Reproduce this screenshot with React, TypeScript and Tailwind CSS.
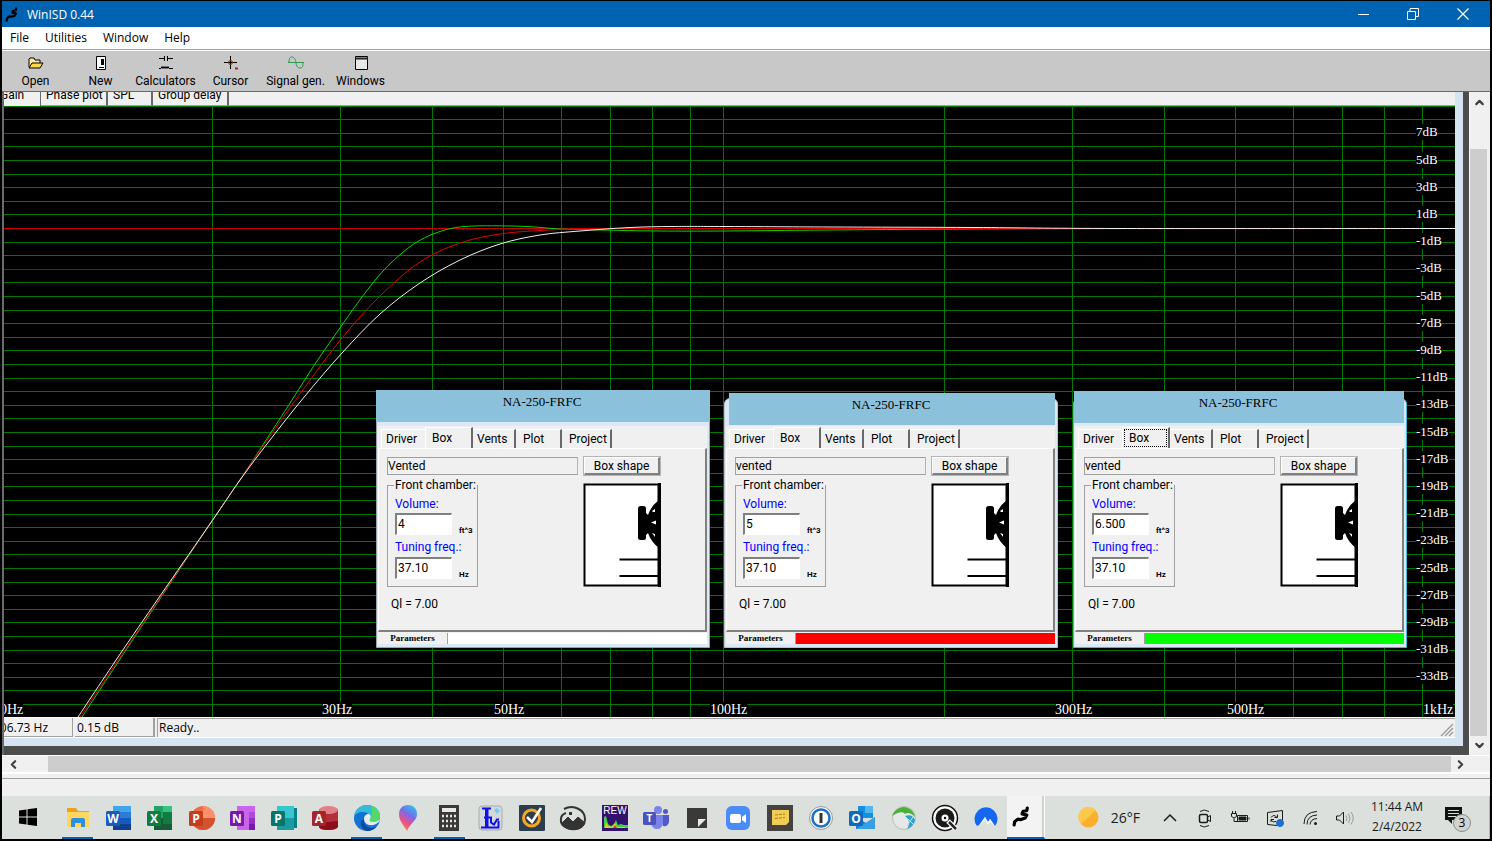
import type { ReactNode } from "react"
import clsx from "clsx"
import { ChevronDown, ChevronLeft, ChevronRight, ChevronUp } from "lucide-react"

type Point = [number, number]

// the plot is drawn in one space: x is log frequency, y is gain
const PLOT = { left: 4, top: 106, width: 1451, height: 611 }

const freqX = (hz: number) => 212 + 732 * Math.log10(hz / 20)
const gainY = (db: number) => 228.5 - 13.6 * db

const freqLines = [20, 30, 40, 50, 60, 70, 80, 90, 100, 200, 300, 400, 500, 600, 700, 800, 900]
const gainLines = Array.from({ length: 45 }, (_, i) => 9 - i)
const gainLabels = Array.from({ length: 21 }, (_, i) => 7 - i * 2)

const freqLabels = [
  { text: "10Hz", x: -7 },
  { text: "30Hz", x: 322 },
  { text: "50Hz", x: 494 },
  { text: "100Hz", x: 710 },
  { text: "300Hz", x: 1055 },
  { text: "500Hz", x: 1227 },
  { text: "1kHz", x: 1423 },
]

const curves: { color: string; points: Point[] }[] = [
  {
    color: "#00d800",
    points: [[82, 717], [132, 641], [212, 521], [240, 480], [270, 434], [292, 400], [315, 364], [342, 325], [362, 297], [383, 271], [402, 253], [417, 242], [433, 234], [453, 228], [475, 226], [510, 226], [535, 227], [560, 229], [600, 230], [660, 231], [724, 231], [830, 230], [975, 229], [1200, 228.5], [1455, 228.5]],
  },
  {
    color: "#e00000",
    points: [[80, 717], [131, 641], [212, 521], [240, 480], [270, 436], [305, 387], [342, 338], [380, 296], [420, 262], [460, 243], [500, 234], [540, 230.5], [580, 229], [640, 228.5], [830, 228.5], [1455, 228.5]],
  },
  {
    color: "#f0f0f0",
    points: [[78, 717], [129, 641], [212, 521], [240, 480], [270, 440], [305, 396], [342, 353], [380, 314], [420, 283], [460, 260], [500, 244], [540, 235], [580, 231], [630, 227.5], [673, 226.5], [724, 226.5], [830, 227], [975, 227.5], [1120, 228.5], [1455, 228.5]],
  },
]

const smoothPath = (p: Point[]) =>
  p.slice(1).reduce((d, cur, i) => {
    const prev = p[i]
    const before = p[i - 1] ?? prev
    const after = p[i + 2] ?? cur
    const c1 = [prev[0] + (cur[0] - before[0]) / 6, prev[1] + (cur[1] - before[1]) / 6]
    const c2 = [cur[0] - (after[0] - prev[0]) / 6, cur[1] - (after[1] - prev[1]) / 6]
    return `${d}C${c1.join(" ")} ${c2.join(" ")} ${cur.join(" ")}`
  }, `M${p[0].join(" ")}`)

const left = (x: number) => `${((x - PLOT.left) / PLOT.width) * 100}%`
const top = (y: number) => `${((y - PLOT.top) / PLOT.height) * 100}%`

const ui = "font-['Roboto','Liberation_Sans',sans-serif]"
const serif = "font-['Liberation_Serif',serif]"

const Squiggle = ({ className }: { className?: string }) => (
  <svg viewBox="0 0 18 20" className={className} aria-hidden>
    <path d="M2 18 L2.500 15 L5.500 12.500 L8 13 L12.500 11.500 L14 8.500 L9.500 7.500 L10.500 5 L14 4.500 L14.500 2" fill="none" stroke="#000" strokeWidth="3" strokeLinecap="round" strokeLinejoin="round" />
  </svg>
)

const TitleBar = () => (
  <header className="flex h-[26px] shrink-0 items-center bg-[#0063b1] text-white">
    <Squiggle className="ml-[3px] h-[15px] w-[14px]" />
    <h1 className="ml-2 pt-px text-xs">WinISD 0.44</h1>
    <div className="ml-auto flex h-full">
      <button aria-label="Minimize" className="flex w-[49px] items-center justify-center">
        <svg width="12" height="12"><path d="M0 6.500H11" stroke="#fff" /></svg>
      </button>
      <button aria-label="Restore" className="flex w-[49px] items-center justify-center">
        <svg width="12" height="12" fill="none" stroke="#fff"><path d="M.5 3.500h8v8h-8zM3 3.500V.5h8.500v8H9" /></svg>
      </button>
      <button aria-label="Close" className="flex w-[53px] items-center justify-center pr-px pb-px">
        <svg width="12" height="12"><path d="M.5 .5l11 11M11.500 .5l-11 11" stroke="#fff" strokeWidth="1.200" /></svg>
      </button>
    </div>
  </header>
)

const MenuBar = () => (
  <nav className="flex h-[22px] shrink-0 items-center gap-4 bg-white pl-2 text-xs text-black">
    {["File", "Utilities", "Window", "Help"].map((item) => (
      <button key={item}>{item}</button>
    ))}
  </nav>
)

const tools: { name: string; icon: ReactNode }[] = [
  {
    name: "Open",
    icon: (
      <svg width="18" height="16" stroke="#000" strokeLinejoin="round">
        <path d="M2 12V4l1-1h4l1 2h5v3" fill="#fbe9a0" />
        <path d="M2 13l3-5h11l-3 5z" fill="#ffd84a" />
      </svg>
    ),
  },
  {
    name: "New",
    icon: (
      <svg width="18" height="16">
        <path d="M4.500 1.500h9v13h-9z" fill="#fff" stroke="#000" />
        <path d="M9 4h3v6H9zM7 12h5v1H7z" fill="#000" />
      </svg>
    ),
  },
  {
    name: "Calculators",
    icon: (
      <svg width="18" height="16" fill="none" stroke="#000">
        <path d="M2 3.500h5M7.500 1v5M10.500 1v5M11 3.500h5M2 13.500h2l1-2 1 2 1-2 1 2 1-2 1 2 1-2 1 2h4" />
      </svg>
    ),
  },
  {
    name: "Cursor",
    icon: (
      <svg width="18" height="16" fill="none" stroke="#000">
        <path d="M8.500 1v13M2 7.500h13" />
        <circle cx="8.500" cy="7.500" r="2" stroke="#7a4a00" />
        <path d="M13 13.500h3" stroke="#b02020" strokeWidth="2" />
      </svg>
    ),
  },
  {
    name: "Signal gen.",
    icon: (
      <svg width="20" height="16" fill="none" stroke="#2e9a4e">
        <path d="M2 7.500h16M3 7.500C3 3 4 2 6 2s3.500 2 4 6 2 5 4 5 3-1 3-5" />
      </svg>
    ),
  },
  {
    name: "Windows",
    icon: (
      <svg width="18" height="16">
        <path d="M3.500 1.500h12v13h-12z" fill="#e8e8e8" stroke="#000" />
        <path d="M3 3.500h13" stroke="#222" strokeWidth="2" />
      </svg>
    ),
  },
]

const Toolbar = () => (
  <div className="h-[43px] shrink-0 border-t border-b border-t-[#a0a0a0] border-b-[#696969]">
    <div className={clsx("flex h-full border-t border-white bg-[#c8c8c8] pl-px text-xs text-black", ui)}>
      {tools.map(({ name, icon }) => (
        <button key={name} className="flex w-[65px] flex-col items-center pt-1 whitespace-nowrap">
          {icon}
          <span className="leading-5">{name}</span>
        </button>
      ))}
    </div>
  </div>
)

const plotTabs = [
  { name: "Phase plot", width: "w-[67px]" },
  { name: "SPL", width: "w-[45px]" },
  { name: "Group delay", width: "w-[76px]" },
]

const PlotTabs = () => (
  <div className={clsx("flex h-[14px] shrink-0 items-end overflow-hidden bg-[#f0f0f0] text-xs text-black", ui)}>
    <button className="-ml-1 h-5 w-[41px] border-r border-[#696969] pb-[3px] text-left leading-4">Gain</button>
    {plotTabs.map((tab) => (
      <button
        key={tab.name}
        className={clsx("h-5 border-r-2 border-b border-r-[#696969] border-b-[#a0a0a0] pb-px pl-[5px] text-left leading-4", tab.width)}
      >
        {tab.name}
      </button>
    ))}
    <div className="h-5 flex-1 border-b border-[#a0a0a0]" />
  </div>
)

const Plot = () => (
  <div className={clsx("absolute inset-0 bg-black text-sm leading-4 text-white", serif)}>
    <svg
      viewBox={`${PLOT.left} ${PLOT.top} ${PLOT.width} ${PLOT.height}`}
      preserveAspectRatio="none"
      className="absolute inset-0 h-full w-full"
      fill="none"
      role="img"
      aria-label="Gain plot"
    >
      <g stroke="#007800" shapeRendering="crispEdges">
        {gainLines.filter((db) => db !== -3 && db !== 0).map((db) => (
          <path key={db} d={`M4 ${gainY(db)}H1455`} />
        ))}
        {freqLines.map((hz) => (
          <path key={hz} d={`M${freqX(hz)} 106V717`} />
        ))}
      </g>
      <path d={`M4 ${gainY(-3)}H1455`} stroke="#7c007c" shapeRendering="crispEdges" />
      <path d={`M4 ${gainY(0)}H1455`} stroke="#c80000" shapeRendering="crispEdges" />
      {curves.map(({ color, points }) => (
        <path key={color} d={smoothPath(points)} stroke={color} />
      ))}
    </svg>
    {gainLabels.map((db) => (
      <span key={db} className="absolute -translate-y-1/2 bg-black text-[13px]" style={{ left: left(1416), top: top(gainY(db) - 1) }}>
        {db}dB
      </span>
    ))}
    {freqLabels.map(({ text, x }) => (
      <span key={text} className="absolute bottom-0 bg-black leading-[15px]" style={{ left: left(x) }}>
        {text}
      </span>
    ))}
  </div>
)

const BoxDrawing = () => (
  <svg width="78" height="104" aria-hidden>
    <path d="M1.500 1.500h74v101h-74z" fill="#fff" stroke="#000" strokeWidth="2" />
    <path d="M76.500 0v104" stroke="#000" strokeWidth="3" />
    <path d="M36.500 76.500H75M36.500 93H75" stroke="#000" strokeWidth="2" />
    <rect x="55" y="23" width="8" height="34" rx="2.500" />
    <path d="M62 29l3 3q3-9 11-15v48q-8-6-11-15l-3 3z" />
    <path d="M69 28l3-2v3h-2zM68 39.500l5-2v4zM69 50l3 1v3z" fill="#fff" />
  </svg>
)

const boxTabs = [
  { name: "Vents", className: "w-[43px] pl-1" },
  { name: "Plot", className: "w-[46px] pl-[7px]" },
  { name: "Project", className: "w-[50px] pl-[7px]" },
]

interface IBoxWindow {
  id: string
  type: string
  volume: string
  color: string
  position: string
  frame: string
  title: string
  focused?: boolean
}

const inputStyle = "h-[22px] w-[57px] border border-t-2 border-l-2 border-t-[#808080] border-l-[#808080] border-r-white border-b-white bg-white pl-px pb-px"

const BoxWindow = ({ id, type, volume, color, position, frame, title, focused }: IBoxWindow) => (
  <section className={clsx("absolute flex h-[258px] w-[334px] flex-col text-xs text-black", ui, position)}>
    <div className={clsx("absolute inset-x-0 top-2 bottom-0 rounded-t-md border bg-[#dbe9f6]", frame)} />
    <div className="relative h-9">
      <h2 className={clsx("h-8 bg-[#8cc1dc] pt-1 pr-[2px] text-center text-[13px] leading-4", serif, title)}>NA-250-FRFC</h2>
    </div>
    <div className="relative mr-[3px] mb-[3px] ml-[2px] flex flex-1 flex-col bg-[#f0f0f0]">
      <div className="flex h-[22px] items-end pl-[3px]">
        <button className="h-[19px] w-[44px] border-t border-l border-white pl-1 text-left">Driver</button>
        <button className="h-[21px] w-[48px] border-t border-l border-r-2 border-white border-r-[#696969] p-px">
          <span className={clsx("block h-full border border-dotted pl-1 text-left leading-4", focused ? "border-black" : "border-transparent")}>
            Box
          </span>
        </button>
        {boxTabs.map((tab) => (
          <button key={tab.name} className={clsx("h-[19px] border-t border-r-2 border-t-white border-r-[#696969] text-left", tab.className)}>
            {tab.name}
          </button>
        ))}
      </div>
      <div className="flex-1 border-t border-r-2 border-b-2 border-l border-t-white border-r-[#808080] border-b-[#808080] border-l-white pt-2 pl-2">
        <div className="flex gap-[6px]">
          <input
            readOnly
            aria-label="Box type"
            value={type}
            className="h-[18px] w-[191px] border border-[#a0a0a0] border-r-[#b4b4b4] bg-[#f0f0f0]"
          />
          <button className="h-[18px] w-[76px] border border-t-white border-r-2 border-b-2 border-l-white border-r-[#808080] border-b-[#808080] leading-[14px] outline outline-[#b4b4b4]">
            Box shape
          </button>
        </div>
        <div className="mt-1 flex w-[274px] items-end justify-between">
          <fieldset className="h-[108px] w-[91px] border border-[#a0a0a0] pt-1 pl-[7px]">
            <legend className="-ml-px px-px leading-[13px] whitespace-nowrap">Front chamber:</legend>
            <label htmlFor={`${id}-volume`} className="block leading-4 text-[#0000ff]">Volume:</label>
            <div className="mt-px flex items-end gap-[7px]">
              <input id={`${id}-volume`} defaultValue={volume} className={inputStyle} />
              <span className="text-[8px] leading-[9px] font-bold">ft^3</span>
            </div>
            <label htmlFor={`${id}-tuning`} className="mt-1 block leading-4 text-[#0000ff]">Tuning freq.:</label>
            <div className="mt-[2px] flex items-end gap-[7px]">
              <input id={`${id}-tuning`} defaultValue="37.10" className={inputStyle} />
              <span className="text-[8px] leading-[9px] font-bold">Hz</span>
            </div>
          </fieldset>
          <BoxDrawing />
        </div>
        <p className="mt-[9px] ml-1 leading-4">Ql = 7.00</p>
      </div>
      <div className="flex h-[13px] border-b border-[#dbe9f6] pt-px">
        <div className={clsx("w-[70px] border-r border-[#a0a0a0] text-center text-[9px] leading-[11px] font-bold", serif)}>Parameters</div>
        <div className={clsx("flex-1", color)} />
      </div>
    </div>
  </section>
)

const StatusBar = () => (
  <footer className="flex h-[21px] shrink-0 items-center gap-[2px] border-y border-white bg-[#f0f0f0] text-xs text-black">
    <div className="flex h-full w-[69px] items-center overflow-hidden border-r border-b border-[#a0a0a0] pt-[2px] whitespace-nowrap">
      <span className="-ml-[11px]">106.73 Hz</span>
    </div>
    <div className="flex h-full w-[80px] items-center border-r-2 border-b border-[#a0a0a0] pt-[2px] pl-[2px]">0.15 dB</div>
    <div className="flex h-full flex-1 items-center justify-between border-t border-l border-[#a0a0a0] pl-px">
      Ready..
      <svg width="14" height="14" stroke="#a0a0a0" strokeWidth="1.500" className="mr-px self-end" aria-hidden>
        <path d="M1 13L13 1M5 13l8-8M9 13l4-4" />
      </svg>
    </div>
  </footer>
)

const ProjectWindow = () => (
  <main className="flex min-w-0 flex-1 flex-col border-r-[6px] border-b-[9px] border-[#4d4d4d]">
    <div className="flex flex-1 flex-col border-r-8 border-b-8 border-[#d6e4f1]">
      <PlotTabs />
      <div className="relative flex-1 overflow-hidden">
        <Plot />
        <BoxWindow id="box1" type="Vented" volume="4" color="bg-white" position="left-[372px] top-[284px]" frame="border-[#9aa4ac]" title="" />
        <BoxWindow id="box2" type="vented" volume="5" color="bg-[#ff0000]" position="left-[720px] top-[284px]" frame="border-[#b8c4cc]" title="mt-[3px] ml-[5px] mr-[3px]" />
        <BoxWindow id="box3" type="vented" volume="6.500" color="bg-[#00ff00]" position="left-[1069px] top-[284px]" frame="border-[#45b8d8]" title="mt-px ml-px mr-[3px]" focused />
      </div>
      <StatusBar />
    </div>
  </main>
)

const scrollArrow = "flex items-center justify-center text-[#404040]"

const VerticalScroll = () => (
  <div className="mr-[2px] flex w-[19px] shrink-0 flex-col border-l border-white bg-[#f0f0f0]">
    <button aria-label="Scroll up" className={clsx(scrollArrow, "h-5")}>
      <ChevronUp size={13} strokeWidth={4} />
    </button>
    <div className="mt-[37px] mr-px flex-1 bg-[#cdcdcd]" />
    <button aria-label="Scroll down" className={clsx(scrollArrow, "h-[19px]")}>
      <ChevronDown size={13} strokeWidth={4} />
    </button>
  </div>
)

const HorizontalScroll = () => (
  <div className="flex h-[19px] shrink-0 border-t border-b-2 border-white bg-[#f0f0f0] pr-5">
    <button aria-label="Scroll left" className={clsx(scrollArrow, "w-[22px]")}>
      <ChevronLeft size={13} strokeWidth={4} />
    </button>
    <div className="ml-6 flex-1 bg-[#cdcdcd]" />
    <button aria-label="Scroll right" className={clsx(scrollArrow, "w-[19px]")}>
      <ChevronRight size={13} strokeWidth={4} />
    </button>
  </div>
)

// letter tile over an application shape, as in the Office icon set
const Office = ({ letter, tile, children }: { letter: string; tile: string; children: ReactNode }) => (
  <svg width="28" height="26" viewBox="0 0 28 26">
    {children}
    <rect x="1" y="6" width="14" height="15" rx="1.500" fill={tile} />
    <text x="8" y="18" textAnchor="middle" fontSize="12" fontWeight="700" fill="#fff" fontFamily="Open Sans, sans-serif">
      {letter}
    </text>
  </svg>
)

const apps: { name: string; icon: ReactNode; running?: boolean }[] = [
  {
    name: "File Explorer",
    running: true,
    icon: (
      <svg width="26" height="24">
        <path d="M2 2h9l2 3h11v16H2z" fill="#e8a317" />
        <path d="M2 6h22v15H2z" fill="#ffd75e" />
        <path d="M6 21v-7q0-2 2-2h10q2 0 2 2v7h-4v-4h-6v4z" fill="#2e8fe0" />
      </svg>
    ),
  },
  {
    name: "Word",
    icon: (
      <Office letter="W" tile="#185abd">
        <path d="M8 1h18v6H8z" fill="#41a5ee" />
        <path d="M8 7h18v6H8z" fill="#2b7cd3" />
        <path d="M8 13h18v6H8z" fill="#185abd" />
        <path d="M8 19h18v6H8z" fill="#103f91" />
      </Office>
    ),
  },
  {
    name: "Excel",
    icon: (
      <Office letter="X" tile="#107c41">
        <path d="M8 1h18v24H8z" fill="#185c37" />
        <path d="M8 1h9v12H8z" fill="#21a366" />
        <path d="M17 1h9v6h-9z" fill="#33c481" />
        <path d="M17 7h9v12h-9z" fill="#107c41" />
      </Office>
    ),
  },
  {
    name: "PowerPoint",
    icon: (
      <Office letter="P" tile="#c43e1c">
        <circle cx="15" cy="13" r="12" fill="#ed6c47" />
        <path d="M15 1a12 12 0 0 1 12 12H15z" fill="#ff8f6b" />
        <path d="M3 13h24a12 12 0 0 1-24 0z" fill="#d35230" />
      </Office>
    ),
  },
  {
    name: "OneNote",
    icon: (
      <Office letter="N" tile="#7719aa">
        <path d="M8 1h18v24H8z" fill="#ca64ea" />
        <path d="M20 7h6v6h-6z" fill="#ae4bd5" />
        <path d="M20 13h6v6h-6z" fill="#9332bf" />
        <path d="M20 19h6v6h-6z" fill="#7719aa" />
      </Office>
    ),
  },
  {
    name: "Publisher",
    icon: (
      <Office letter="P" tile="#077568">
        <path d="M12 3h15v20H12z" fill="#038387" />
        <path d="M7 1h17v12H7z" fill="#37c6d0" />
        <path d="M7 13h17v12H7z" fill="#1a9ba1" />
      </Office>
    ),
  },
  {
    name: "Access",
    icon: (
      <Office letter="A" tile="#a4262c">
        <path d="M8 4v18q1 3 9 3t10-3V4z" fill="#b5303a" />
        <path d="M8 18v4q1 3 9 3t10-3v-6z" fill="#8c0e18" />
        <ellipse cx="17.500" cy="5" rx="9.500" ry="4" fill="#e08088" />
      </Office>
    ),
  },
  {
    name: "Edge",
    running: true,
    icon: (
      <svg width="28" height="28" viewBox="0 0 28 28">
        <circle cx="14" cy="14" r="13" fill="#1173d4" />
        <path d="M1 13C2 5 8 1 14 1c8 0 13 5 13 11 0 4-3 6-7 6-3 0-4-1-3-3 1-4-2-7-7-7-5 0-8 2-9 5z" fill="#33bcd8" />
        <path d="M19 2c5 2 8 6 8 10 0 4-3 6-7 6-3 0-4-1-3-3 2-4 2-8 2-13z" fill="#54d86a" />
        <path d="M11 15c-1 7 6 12 13 7-3 4-7 5-10 5-6-2-9-10-3-12z" fill="#0c4a9c" />
        <path d="M16 10c-3 0-5 2-5 5 0 5 6 8 12 5 2-1 4-3 4-5-2 2-4 3-7 3s-4-1-3-3c1-2 1-4-1-5z" fill="#e6ece8" />
      </svg>
    ),
  },
  {
    name: "Paint 3D",
    icon: (
      <svg width="22" height="28" viewBox="0 0 22 28">
        <defs>
          <linearGradient id="paint" x1="0.800" y1="0" x2="0.300" y2="1">
            <stop offset="0" stopColor="#2cc4ee" />
            <stop offset="0.400" stopColor="#7a6be8" />
            <stop offset="0.700" stopColor="#e8508c" />
            <stop offset="1" stopColor="#f58a3c" />
          </linearGradient>
        </defs>
        <path d="M11 1c6 0 9 4 9 9 0 7-7 9-10 17-3-5-8-10-8-17 0-5 3-9 9-9z" fill="url(#paint)" />
      </svg>
    ),
  },
  {
    name: "Calculator",
    running: true,
    icon: (
      <svg width="22" height="28">
        <path d="M1 1h20v26H1z" fill="#3b3a39" />
        <path d="M4 4h14v4H4z" fill="#e8e8e8" />
        <path d="M4 12h14M4 17h14M4 22h14" stroke="#e8e8e8" strokeWidth="2.500" strokeDasharray="2 2" />
      </svg>
    ),
  },
  {
    name: "LspCAD",
    icon: (
      <svg width="26" height="26">
        <rect x="1" y="1" width="23" height="24" rx="3" fill="#d4d8dc" stroke="#a8acb0" />
        <path d="M4 3.500h9M8.500 3v19M3 22.500h18M20.500 16v7M6 12.500h7v5l3 2 3-5h2" fill="none" stroke="#1010e8" strokeWidth="2" />
        <path d="M7 3h3.500v19H7z" fill="#1010e8" />
        <path d="M16 5l3-2 3 3-3 3z" fill="#6fd0f0" />
      </svg>
    ),
  },
  {
    name: "Norton",
    icon: (
      <svg width="28" height="28">
        <rect x="1" y="1" width="26" height="26" rx="1" fill="#2c3e4c" />
        <circle cx="13.500" cy="14" r="8" fill="none" stroke="#f5a623" strokeWidth="3" />
        <path d="M9 13l5 5L23 4" fill="none" stroke="#fff" strokeWidth="2.500" />
      </svg>
    ),
  },
  {
    name: "Photos",
    icon: (
      <svg width="28" height="26" fill="none" stroke="#333">
        <path d="M5 4c10-5 21 1 21 10 0 6-5 10-12 10S1 20 2 14c0-3 2-5 5-6" strokeWidth="2" />
        <path d="M3 18l6-6 5 5 5-5 7 6c-3 9-20 9-23 0z" fill="#333" />
        <path d="M10 8.500h3" strokeWidth="3" />
      </svg>
    ),
  },
  {
    name: "REW",
    icon: (
      <svg width="28" height="28">
        <path d="M1 1h26v26H1z" fill="#32106e" />
        <path d="M3 24V13l2-1 2 8 3 2 3-2 2-4 2 5 3-1 3 1 4 0v3z" fill="#3fd04a" />
        <path d="M4 24l1-6 2 4 4 1 3-4 2 4 8 0v1z" fill="#e8d020" />
        <path d="M12 24l2-3 2 3z" fill="#e03a20" />
        <text x="14" y="10" textAnchor="middle" fontSize="10" fill="#fff" fontFamily="Liberation Sans, sans-serif">REW</text>
      </svg>
    ),
  },
  {
    name: "Teams",
    icon: (
      <svg width="28" height="26">
        <circle cx="16" cy="5" r="4" fill="#7b83eb" />
        <circle cx="23.500" cy="6.500" r="2.500" fill="#5059c9" />
        <path d="M19 10h8v7q-1 5-6 4z" fill="#5059c9" />
        <path d="M9 10h12v8q-1 6-6 6t-6-6z" fill="#7b83eb" />
        <rect x="1" y="7" width="13" height="13" rx="1.500" fill="#4b53bc" />
        <text x="7.500" y="17" textAnchor="middle" fontSize="10" fontWeight="700" fill="#fff" fontFamily="Open Sans, sans-serif">T</text>
      </svg>
    ),
  },
  {
    name: "Sticky Notes",
    icon: (
      <svg width="22" height="22">
        <path d="M1 1h20v20H1z" fill="#3b3a39" />
        <path d="M12 20v-8h8z" fill="#e8ece8" />
      </svg>
    ),
  },
  {
    name: "Zoom",
    icon: (
      <svg width="26" height="26">
        <rect x="1" y="1" width="24" height="24" rx="6" fill="#4a8cf7" />
        <rect x="5" y="9" width="11" height="9" rx="2" fill="#fff" />
        <path d="M17 12l4-3v9l-4-3z" fill="#fff" />
      </svg>
    ),
  },
  {
    name: "Notes",
    icon: (
      <svg width="28" height="28">
        <path d="M1 1h26v26H1z" fill="#444340" />
        <path d="M6 6h17v12l-3 3H6z" fill="#f2cd55" />
        <path d="M9 11l10-1M9 14.500l10-1" stroke="#a8841c" strokeDasharray="3 1" />
      </svg>
    ),
  },
  {
    name: "1Password",
    icon: (
      <svg width="26" height="26">
        <circle cx="13" cy="13" r="11.500" fill="#f4f4f4" stroke="#9a9a9a" />
        <circle cx="13" cy="13" r="8.500" fill="#fff" stroke="#1a72c4" strokeWidth="2.500" />
        <path d="M13 8v10" stroke="#333" strokeWidth="3" />
      </svg>
    ),
  },
  {
    name: "Outlook",
    icon: (
      <Office letter="O" tile="#0f6cbd">
        <path d="M10 1h15v12H10z" fill="#1490df" />
        <path d="M17 1h8v7h-8z" fill="#50b5f2" />
        <path d="M8 12l10 6 9-6v12H8z" fill="#1f7fd0" />
        <path d="M8 24l19-12v12z" fill="#35a0e8" />
      </Office>
    ),
  },
  {
    name: "Webex",
    icon: (
      <svg width="26" height="26">
        <circle cx="13" cy="13" r="11.500" fill="#e4e8e6" stroke="#b8bcba" />
        <path d="M1 11C4 4 11 0 17 3c4 2 6 4 7 9-4-4-7-5-10-3-2-3-7-2-13 2z" fill="#4caf3a" />
        <path d="M14 11c6-2 9 1 10 4-1 4-3 7-8 9 3-5 3-9-2-13z" fill="#2fa0cc" />
        <path d="M17 14l6 6M22 12l-6 9" stroke="#bfe0ec" />
      </svg>
    ),
  },
  {
    name: "Groove",
    icon: (
      <svg width="28" height="28">
        <circle cx="14" cy="14" r="12.500" fill="#fff" stroke="#111" strokeWidth="1.500" />
        <circle cx="14" cy="14" r="9.500" fill="#1a1a1a" />
        <circle cx="14" cy="14" r="3.500" fill="#fff" />
        <circle cx="14" cy="14" r="1.200" />
        <path d="M17 17l8 8" stroke="#fff" strokeWidth="5" />
        <path d="M18 18l7 7" stroke="#222" strokeWidth="2.500" />
      </svg>
    ),
  },
  {
    name: "NordVPN",
    icon: (
      <svg width="26" height="24">
        <path d="M4 20A11.500 11.500 0 1 1 22 20l-5-7-2 3-3-5-6 8z" fill="#1566f0" />
        <path d="M6 20l6-9 3 5 2-3 5 7-5-4-2 3-3-5z" fill="#f4f8fc" />
      </svg>
    ),
  },
]

const tray: { name: string; icon: ReactNode }[] = [
  { name: "Show hidden icons", icon: <path d="M4 13l6-6 6 6" strokeWidth="1.500" /> },
  {
    name: "Meet now",
    icon: (
      <>
        <rect x="4.500" y="6.500" width="8" height="8" rx="1.500" strokeWidth="1.500" />
        <path d="M12.500 9l3-1.500v6l-3-1.500M5 3.500q4-3 9 0M5 17.500q4 3 9 0" />
      </>
    ),
  },
  {
    name: "Battery",
    icon: (
      <>
        <path d="M7.500 7.500h10v6h-10zM19 9.500v2M1.500 5.500h5v3q-2.500 3-5 0zM2.500 3v2.500M5.500 3v2.500M4 10.500v3h4" />
        <path d="M9 9h7v3H9z" fill="currentColor" />
      </>
    ),
  },
  {
    name: "Sync",
    icon: (
      <>
        <path d="M2.500 4.500l15-2v10M12 17.500l-9.500-1v-12M6 9.500q3-4 6 0M12.500 6.500v3h-3M6 14v-2.500h3M6 12q2 3 5 1.500" />
        <circle cx="15" cy="15" r="3.500" fill="#1a6fd0" stroke="#1a6fd0" />
      </>
    ),
  },
  {
    name: "Wi-Fi",
    icon: (
      <>
        <path d="M4 16Q4 4 17 3.500M7 16.500Q7 7.500 17 7M10 16.500Q10.500 11 17 10.500" />
        <circle cx="15.500" cy="15.500" r="1.500" fill="currentColor" stroke="none" />
      </>
    ),
  },
  {
    name: "Volume",
    icon: (
      <>
        <path d="M1.500 8h3l4-4v12l-4-4h-3z" />
        <path d="M11 7.500q2 3 0 5.500M13.500 5.500q3 5 0 9.500M16 4q4.500 6 0 12.500" stroke="#999" />
      </>
    ),
  },
]

const Taskbar = () => (
  <div className="flex h-[43px] shrink-0 items-stretch bg-[#dce0dc] text-xs text-[#1a1a1a]">
    <button aria-label="Start" className="flex w-[55px] shrink-0 items-center justify-center pr-[3px] pb-[2px]">
      <svg width="18" height="18" aria-hidden>
        <path d="M0 2.500l7.500-1V8.500H0zM8.500 1.300L18 0v8.500H8.500zM0 9.500h7.500v7l-7.500-1zM8.500 9.500H18V18l-9.500-1.300z" />
      </svg>
    </button>
    <div className="flex w-[950px]">
      {apps.map(({ name, icon, running }) => (
        <button key={name} aria-label={name} className="flex min-w-0 flex-1 flex-col items-center">
          <span className="flex flex-1 items-center">{icon}</span>
          <span className={clsx("-mt-[2px] h-[2px] w-[31px]", running && "bg-[#0063b1]")} />
        </button>
      ))}
    </div>
    <button aria-label="WinISD" className="flex w-[35px] shrink-0 items-center justify-center border-b-2 border-[#0063b1] bg-[#f2f3f2] pr-[6px]">
      <Squiggle className="h-[21px] w-[19px]" />
    </button>
    <div className="w-[3px] border-r border-b-2 border-r-white border-b-[#0063b1] bg-[#cfd3cf]" />
    <button className="ml-auto flex items-center gap-3">
      <svg width="21" height="21" aria-hidden>
        <circle cx="10.500" cy="10.500" r="10" fill="#fbb02d" />
        <path d="M3 17A10 10 0 0 1 18 3z" fill="#fcc94a" />
      </svg>
      <span className="text-sm">26°F</span>
    </button>
    <div className="ml-3 flex">
      {tray.map(({ name, icon }) => (
        <button key={name} aria-label={name} className="flex w-[35px] items-center justify-center">
          <svg width="20" height="20" fill="none" stroke="currentColor" aria-hidden>
            {icon}
          </svg>
        </button>
      ))}
    </div>
    <div className="ml-[7px] flex w-[56px] flex-col justify-center pb-px text-center leading-5 whitespace-nowrap">
      <span>11:44 AM</span>
      <span>2/4/2022</span>
    </div>
    <button aria-label="Notifications" className="ml-[19px] flex w-[46px] items-center border-r border-[#b4b8b4]">
      <svg width="28" height="28" aria-hidden>
        <path d="M1 3h17v13H8v4l-4-4H1z" fill="#111" />
        <path d="M4 6.500h11M4 9.500h11M4 12.500h8" stroke="#dce0dc" />
        <circle cx="18" cy="19" r="8.500" fill="#d0d3d0" stroke="#8a8d8a" />
        <text x="18" y="23" textAnchor="middle" fontSize="12" fontFamily="Open Sans, sans-serif">3</text>
      </svg>
    </button>
  </div>
)

export default function App() {
  return (
    <div className="flex min-h-screen flex-col border-2 border-t border-black bg-[#f0f0f0] font-['Open_Sans',sans-serif]">
      <TitleBar />
      <MenuBar />
      <Toolbar />
      <div className="flex flex-1 border-l-2 border-[#6b6b6b]">
        <ProjectWindow />
        <VerticalScroll />
      </div>
      <HorizontalScroll />
      <div className="h-[22px] shrink-0 pt-1">
        <div className="h-full border-t border-[#a0a0a0]" />
      </div>
      <Taskbar />
    </div>
  )
}
